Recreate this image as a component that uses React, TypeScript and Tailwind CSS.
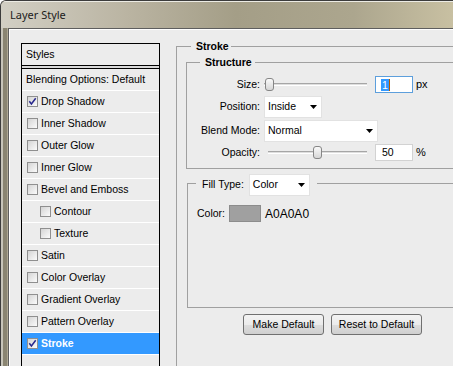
import React from 'react';

type StyleRow = { label: string; checked?: boolean; indent?: boolean; active?: boolean };

const styleRows: StyleRow[] = [
  { label: 'Drop Shadow', checked: true },
  { label: 'Inner Shadow' },
  { label: 'Outer Glow' },
  { label: 'Inner Glow' },
  { label: 'Bevel and Emboss' },
  { label: 'Contour', indent: true },
  { label: 'Texture', indent: true },
  { label: 'Satin' },
  { label: 'Color Overlay' },
  { label: 'Gradient Overlay' },
  { label: 'Pattern Overlay' },
  { label: 'Stroke', checked: true, active: true },
];

function Checkbox({ checked }: { checked?: boolean }) {
  return (
    <div className="w-[11px] h-[11px] shrink-0 border border-[#8f8f8f] bg-[linear-gradient(135deg,#d4d4d4,#fbfbfb)] flex items-center justify-center">
      {checked && (
        <svg width="9" height="9" viewBox="0 0 9 9">
          <path d="M1.3 4.3 L3.4 7 L7.7 1.2" fill="none" stroke="#28288e" strokeWidth="1.5" />
        </svg>
      )}
    </div>
  );
}

function Arrow() {
  return (
    <svg width="7" height="4" viewBox="0 0 7 4" className="shrink-0">
      <polygon points="0,0 7,0 3.5,4" fill="#000" />
    </svg>
  );
}

function Select({ value, className }: { value: string; className: string }) {
  return (
    <div className={`${className} h-[22px] bg-white border border-[#e2e2e2] flex items-center justify-between pl-[3px] pr-[4px]`}>
      <span>{value}</span>
      <Arrow />
    </div>
  );
}

function Slider({ thumb, trackLeft }: { thumb: string; trackLeft: string }) {
  return (
    <div className="relative w-[103px] h-[17px]">
      <div className={`absolute ${trackLeft} right-0 top-[7px] h-[3px] border-t border-[#a6a6a6] border-b border-b-white bg-[#dedede]`} />
      <div className={`absolute ${thumb} top-[2px] w-[9px] h-[13px] rounded-[3px] border border-[#868686] bg-[linear-gradient(to_bottom,#fafafa,#d6d6d6)]`} />
    </div>
  );
}

function Button({ label, className }: { label: string; className: string }) {
  return (
    <div className={`${className} h-[21px] rounded-[3px] border border-[#707070] bg-[linear-gradient(to_bottom,#f3f3f3_0%,#ebebeb_50%,#dddddd_51%,#cfcfcf_100%)] flex items-center justify-center`}>
      {label}
    </div>
  );
}

export default function App() {
  return (
    <div className="w-[453px] h-[366px] overflow-hidden border-l border-t border-[#3c3c3c] rounded-tl-[6px] font-['Liberation_Sans',Arial,sans-serif] text-[10.5px] text-black bg-[#b3ad99]">
      {/* Title bar */}
      <div className="h-[27px] flex items-center pl-[9px] border-t border-[#ecebe4] bg-[linear-gradient(to_right,#d2cfc4_0%,#bab4a2_28%,#a49e87_52%,#aca68e_78%,#c8c0a2_100%)]">
        <span className="font-['Noto_Sans',sans-serif] text-[11px] text-[#1c1c1c]">Layer Style</span>
      </div>

      <div className="flex h-[338px] bg-[linear-gradient(to_right,#c8c5ba_0px,#c8c5ba_2px,#8a8572_2px,#8a8572_6px,#aea894_6px)]">
        <div className="w-[7px] shrink-0" />
        {/* Client area */}
        <div className="flex-1 border-l border-t border-[#5e5e5e] overflow-hidden">
          <div className="h-full border-l border-t border-white bg-[#ececec] flex">
            {/* Styles list */}
            <div className="ml-[11px] mt-[13px] w-[139px] h-[400px] shrink-0 border border-black">
              <div className="h-[22px] flex items-center pl-[4px] border-b border-black">Styles</div>
              <div className="h-[2px] bg-[#d8d8d8]" />
              <div className="h-[22px] flex items-center pl-[4px] border-t border-black">Blending Options: Default</div>
              {styleRows.map((r) => (
                <div key={r.label} className="border-t border-white">
                  <div
                    className={`h-[21px] flex items-center gap-[3px] ${r.indent ? 'pl-[18px]' : 'pl-[5px]'} ${
                      r.active ? 'bg-[#3399ff] text-white font-bold' : ''
                    }`}
                  >
                    <Checkbox checked={r.checked} />
                    <span>{r.label}</span>
                  </div>
                </div>
              ))}
              <div className="border-t border-white" />
            </div>

            {/* Stroke group */}
            <div className="ml-[16px] mt-[16px] w-[320px] h-[400px] shrink-0 border-l border-t border-[#a0a0a0]">
              <div className="-mt-[8px] ml-[14px] w-fit pl-[5px] pr-[2px] bg-[#ececec] font-bold leading-[14px]">Stroke</div>

              {/* Structure */}
              <div className="ml-[9px] mt-[9px] h-[107px] border-l border-t border-b border-[#a0a0a0]">
                <div className="-mt-[8px] ml-[13px] w-fit pl-[5px] pr-[3px] bg-[#ececec] font-bold leading-[14px]">Structure</div>

                <div className="mt-[7px] flex items-center h-[17px]">
                  <div className="w-[73px] text-right">Size:</div>
                  <div className="ml-[4px]">
                    <Slider thumb="left-[1px]" trackLeft="left-0" />
                  </div>
                  <div className="ml-[8px] w-[38px] h-[17px] bg-white border border-[#5d9fdc] flex items-center pl-[5px]">
                    <span className="bg-[#3399ff] text-white px-[1px] leading-[12px]">1</span>
                    <span className="w-px h-[12px] bg-[#b65a00]" />
                  </div>
                  <span className="ml-[3px] text-[11px]">px</span>
                </div>

                <div className="mt-[3px] flex items-center h-[22px]">
                  <div className="w-[73px] text-right">Position:</div>
                  <Select value="Inside" className="ml-[4px] w-[58px]" />
                </div>

                <div className="mt-[2px] flex items-center h-[22px]">
                  <div className="w-[73px] text-right">Blend Mode:</div>
                  <Select value="Normal" className="ml-[4px] w-[114px]" />
                </div>

                <div className="mt-[2px] flex items-center h-[17px]">
                  <div className="w-[73px] text-right">Opacity:</div>
                  <div className="ml-[4px]">
                    <Slider thumb="left-[49px]" trackLeft="left-[4px]" />
                  </div>
                  <div className="ml-[8px] w-[38px] h-[17px] bg-white border border-[#d2d2d2] flex items-center pl-[6px]">50</div>
                  <span className="ml-[3px] text-[11px]">%</span>
                </div>
              </div>

              {/* Fill type */}
              <div className="ml-[10px] mt-[14px] h-[125px] border-l border-t border-b border-[#a0a0a0]">
                <div className="-mt-[10px] ml-[8px] w-fit h-[22px] pl-[6px] pr-[7px] bg-[#ececec] flex items-center">
                  <span>Fill Type:</span>
                  <Select value="Color" className="ml-[5px] w-[61px]" />
                </div>
                <div className="mt-[9px] pl-[9px] flex items-center h-[17px]">
                  <span>Color:</span>
                  <div className="ml-[4px] w-[32px] h-[17px] bg-[#a0a0a0] border border-[#8c8c8c]" />
                  <span className="ml-[4px] text-[12px]">A0A0A0</span>
                </div>
              </div>

              <div className="mt-[6px] ml-[66px] flex gap-[7px]">
                <Button label="Make Default" className="w-[81px]" />
                <Button label="Reset to Default" className="w-[91px]" />
              </div>
            </div>
          </div>
        </div>
      </div>
    </div>
  );
}
